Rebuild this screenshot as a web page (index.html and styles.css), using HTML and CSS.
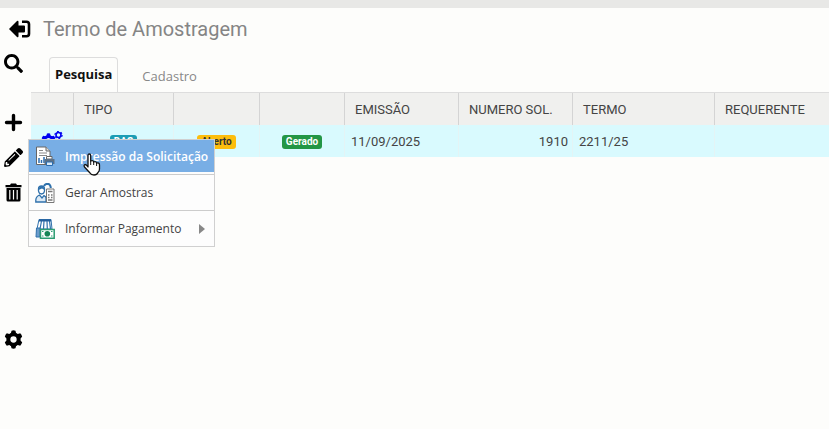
FILE: index.html
```html
<!DOCTYPE html>
<html lang="pt-BR">
  <head>
    <meta charset="UTF-8" />
    <meta name="viewport" content="width=device-width, initial-scale=1.0" />
    <title>Termo de Amostragem</title>
    <link rel="stylesheet" href="styles.css" />
  </head>
  <body>
    <svg class="defs" aria-hidden="true">
      <defs>
        <symbol id="gear" viewBox="0 0 24 24">
          <circle cx="12" cy="12" r="6.500" fill="none" stroke="currentColor" stroke-width="5" />
          <g fill="currentColor">
            <path id="teeth" d="M8.500 5 9.500 .8Q12 0 14.500 .8L15.500 5V7H8.500ZM8.500 19 9.500 23.200Q12 24 14.500 23.200L15.500 19V17H8.500Z" />
            <use href="#teeth" transform="rotate(60 12 12)" />
            <use href="#teeth" transform="rotate(120 12 12)" />
          </g>
        </symbol>
      </defs>
    </svg>

    <div class="topbar"></div>
    <header class="header">
      <button class="icon-button" aria-label="Voltar">
        <svg width="22" height="18" viewBox="0 0 22 18">
          <path d="M0 9 8 1Q9.500 0 9.500 2V5.500H15Q16 5.500 16 6.500V11.500Q16 12.500 15 12.500H9.500V16Q9.500 18 8 17Z" />
          <path d="M13 1.700H17.500Q20 1.700 20 4.200V13.800Q20 16.300 17.500 16.300H13" fill="none" stroke="#000" stroke-width="2.600" />
        </svg>
      </button>
      <h1>Termo de Amostragem</h1>
    </header>

    <div class="layout">
      <aside class="toolbar">
        <button class="icon-button" aria-label="Pesquisar">
          <svg width="19" height="19" viewBox="0 0 512 512">
            <path d="M505 442.700L405.300 343c-4.500-4.500-10.600-7-17-7H372c27.600-35.300 44-79.700 44-128C416 93.100 322.900 0 208 0S0 93.100 0 208s93.100 208 208 208c48.300 0 92.700-16.400 128-44v16.300c0 6.400 2.500 12.500 7 17l99.700 99.700c9.400 9.400 24.600 9.400 33.900 0l28.300-28.300c9.400-9.400 9.400-24.600.1-34zM208 336c-70.700 0-128-57.200-128-128 0-70.700 57.200-128 128-128 70.700 0 128 57.200 128 128 0 70.700-57.200 128-128 128z" />
          </svg>
        </button>
        <div class="toolbar-group">
          <button class="icon-button" aria-label="Novo">
            <svg width="19" height="19" viewBox="0 0 19 19">
              <path d="M9.500 2.500V16.500M2.500 9.500H16.500" fill="none" stroke="#000" stroke-width="3.400" stroke-linecap="round" />
            </svg>
          </button>
          <button class="icon-button" aria-label="Editar">
            <svg width="19" height="19" viewBox="0 0 512 512">
              <path d="M497.900 142.100l-46.100 46.100c-4.700 4.700-12.300 4.700-17 0l-111-111c-4.700-4.700-4.700-12.300 0-17l46.100-46.100c18.700-18.700 49.100-18.700 67.900 0l60.100 60.100c18.800 18.700 18.800 49.100 0 67.900zM284.200 99.800L21.600 362.400.4 483.900c-2.900 16.400 11.400 30.600 27.800 27.800l121.500-21.300 262.600-262.600c4.700-4.700 4.700-12.300 0-17l-111-111c-4.800-4.700-12.400-4.700-17.100 0zM124.100 339.900c-5.500-5.500-5.500-14.300 0-19.800l154-154c5.500-5.500 14.300-5.500 19.800 0s5.500 14.300 0 19.800l-154 154c-5.500 5.500-14.300 5.500-19.800 0zM88 424h48v36.300l-64.500 11.300-31.100-31.100L51.700 376H88v48z" />
            </svg>
          </button>
          <button class="icon-button" aria-label="Excluir">
            <svg width="19" height="19" viewBox="0 0 19 19">
              <path d="M1.500 2H6L7 .5H12L13 2H17.500V4.300H1.500Z" />
              <path fill-rule="evenodd" d="M2.500 5H16.500V17Q16.500 18.500 15 18.500H4Q2.500 18.500 2.500 17ZM5.200 7V16.500H6.400V7ZM8.900 7V16.500H10.100V7ZM12.600 7V16.500H13.800V7Z" />
            </svg>
          </button>
        </div>
        <button class="icon-button" aria-label="Configurações">
          <svg width="19" height="19"><use href="#gear" /></svg>
        </button>
      </aside>

      <main class="content">
        <nav class="tabs" role="tablist">
          <button class="tab tab-active" role="tab" aria-selected="true">Pesquisa</button>
          <button class="tab" role="tab" aria-selected="false">Cadastro</button>
        </nav>

        <div class="grid">
          <table class="table">
            <colgroup>
              <col class="col-actions" />
              <col class="col-type" />
              <col class="col-status" />
              <col class="col-sample" />
              <col class="col-date" />
              <col class="col-date" />
              <col class="col-term" />
              <col />
            </colgroup>
            <thead>
              <tr>
                <th></th>
                <th>TIPO</th>
                <th></th>
                <th></th>
                <th>EMISSÃO</th>
                <th>NUMERO SOL.</th>
                <th>TERMO</th>
                <th>REQUERENTE</th>
              </tr>
            </thead>
            <tbody>
              <tr>
                <td class="center">
                  <button class="icon-button row-actions" aria-label="Ações" aria-haspopup="menu">
                    <svg width="22" height="20" viewBox="0 0 22 20">
                      <use href="#gear" x="0" y="2" width="15" height="15" />
                      <g fill="none" stroke="currentColor">
                        <circle cx="17.500" cy="4" r="2.500" stroke-width="1.600" />
                        <circle cx="17.500" cy="4" r="3.600" stroke-width="1.200" stroke-dasharray="1.880 1.880" />
                        <circle cx="17.500" cy="15" r="2.500" stroke-width="1.600" />
                        <circle cx="17.500" cy="15" r="3.600" stroke-width="1.200" stroke-dasharray="1.880 1.880" />
                      </g>
                    </svg>
                  </button>
                </td>
                <td class="center"><span class="badge badge-teal">DAS</span></td>
                <td class="center"><span class="badge badge-yellow">Aberto</span></td>
                <td class="center"><span class="badge badge-green">Gerado</span></td>
                <td>11/09/2025</td>
                <td class="number">1910</td>
                <td>2211/25</td>
                <td></td>
              </tr>
            </tbody>
          </table>

          <div class="menu" role="menu">
            <button class="menu-item menu-item-active" role="menuitem">
              <svg width="20" height="20" viewBox="0 0 20 20">
                <path d="M1.500 1H11L15 5V18.500H1.500Z" fill="#fff" stroke="#666" />
                <path d="M11 1V5H15" fill="#ddd" stroke="#666" />
                <path d="M4 4.500H8M4 7H12M4 9.500H12" stroke="#888" />
                <path d="M4 17V12M6.500 17V14M9 17V11" stroke="#2a6cb0" stroke-width="1.500" />
                <path d="M11.500 10.500H17V13H11.500Z" fill="#fff" stroke="#666" />
                <path d="M9.500 13H19.500V18H9.500Z" fill="#5b7086" />
                <path d="M11.500 16H17.500V19.500H11.500Z" fill="#d8e8f6" stroke="#2a6cb0" />
              </svg>
              <span>Impressão da Solicitação</span>
            </button>
            <button class="menu-item" role="menuitem">
              <svg width="20" height="20" viewBox="0 0 20 20">
                <path d="M3.500 6Q3.500 3 6.500 3T9.500 6V8Q9 11 6.500 11T3.500 8Z" fill="#fff" stroke="#3071ac" stroke-width="1.300" />
                <path d="M3.500 7Q4 3 6.500 3T9.500 7L7 5.500Z" fill="#3071ac" />
                <path d="M.8 19V17Q1 13.500 4.500 12L7 15 9 12.500Q11 13.500 11 15V19Z" fill="#dbe9f5" stroke="#3071ac" stroke-width="1.300" />
                <path d="M9 3Q10 .8 12.500 .8Q15.500 1 15.800 5" fill="none" stroke="#3071ac" stroke-width="2" />
                <path d="M11.500 6H19V19.500H11.500Z" fill="#fff" stroke="#777" />
                <path d="M13 8.500H17.500M13 12H14.500M16 12H17.500M13 14.500H14.500M16 14.500H17.500M13 17H17.500" stroke="#777" stroke-width="1.300" />
              </svg>
              <span>Gerar Amostras</span>
            </button>
            <button class="menu-item" role="menuitem" aria-haspopup="menu">
              <svg width="20" height="20" viewBox="0 0 20 20">
                <path d="M4 .5H16L17 10H2Z" fill="#fff" stroke="#3071ac" />
                <path d="M4 .5H16V2.500H4Z" fill="#255f9c" />
                <path d="M6.500 2 5 10M9 2 8.500 10M12 2 12.300 10M14.500 2 15.500 10" stroke="#3071ac" stroke-width="1.200" />
                <path d="M1.500 9H5V18H1Z" fill="#6b9bcb" stroke="#3071ac" />
                <path d="M5.500 10.500H19.200V19.200H5.500Z" fill="#fff" stroke="#2c9c72" stroke-width="1.500" />
                <circle cx="12.300" cy="14.800" r="2.800" fill="#168456" />
                <path d="M7 12.500H8.500M16 12.500H17.500M7 17H8.500M16 17H17.500" stroke="#2c9c72" />
              </svg>
              <span>Informar Pagamento</span>
              <svg class="menu-arrow" width="6" height="10" viewBox="0 0 6 10"><path d="M0 0 6 5 0 10Z" /></svg>
            </button>
            <svg class="pointer" width="18" height="23" viewBox="0 0 18 23" aria-hidden="true">
              <path d="M5 14V2.500Q5 1 6.300 1T7.700 2.500V8Q10.300 7 10.700 9Q13 8 13.600 10Q16.500 9.300 16.500 12V16Q16.500 18 15 19.500Q14 22 11 22T7 20L1.500 14Q.5 12 2 11.500Q3.500 11.500 5 14Z" fill="#fff" stroke="#111" stroke-width="1.300" stroke-linejoin="round" />
              <path d="M7.700 8V12M10.700 9V12M13.600 10V13" stroke="#111" />
            </svg>
          </div>
        </div>
      </main>
    </div>
  </body>
</html>
```
FILE: styles.css
```css
* {
  box-sizing: border-box;
}

body {
  margin: 0;
  background: #fdfdfb;
  color: #444;
  font-family: Roboto, sans-serif;
  font-size: 13px;
}

button {
  margin: 0;
  padding: 0;
  border: 0;
  background: none;
  color: inherit;
  font: inherit;
  cursor: pointer;
}

svg {
  display: block;
  flex: none;
}

.defs {
  position: absolute;
  width: 0;
  height: 0;
}

.topbar {
  height: 8px;
  background: #e8e8e6;
}

.header {
  display: flex;
  align-items: center;
  gap: 12px;
  height: 42px;
  padding-left: 9px;
}

h1 {
  margin: 0;
  color: #858585;
  font-size: 20px;
  font-weight: 400;
}

.icon-button {
  color: #000;
}

.layout {
  display: flex;
}

.toolbar {
  display: flex;
  flex: none;
  flex-direction: column;
  align-items: flex-start;
  width: 31px;
  padding: 4px 4px 0;
}

.toolbar-group {
  display: grid;
  gap: 16px;
  margin: 40px 0 128px;
}

.content {
  flex: 1;
  min-width: 0;
}

/* tabs */
.tabs {
  display: flex;
  align-items: flex-end;
  gap: 16px;
  height: 42px;
  padding-left: 18px;
}

.tab {
  height: 32px;
  padding: 0 8px;
  color: #888;
  font-family: "Open Sans", sans-serif;
  font-size: 13px;
}

.tab-active {
  height: 35px;
  padding: 0 5px 2px;
  border: 1px solid #ddd;
  border-bottom: 0;
  border-radius: 4px 4px 0 0;
  color: #111;
  font-weight: 700;
}

/* table */
.grid {
  position: relative;
}

.table {
  width: 100%;
  border-collapse: separate;
  border-spacing: 0;
  border-top: 1px solid #ddd;
  table-layout: fixed;
}

.col-actions {
  width: 43px;
}

.col-type {
  width: 100px;
}

.col-status {
  width: 86px;
}

.col-sample {
  width: 85px;
}

.col-date {
  width: 114px;
}

.col-term {
  width: 142px;
}

th,
td {
  height: 32px;
  padding: 0 6px;
  border-right: 1px solid #e4f4f5;
  text-align: left;
  white-space: nowrap;
}

th {
  padding: 0 10px;
  border-color: #d4d4d4;
  background: #f0f0ee;
  font-weight: 400;
}

td {
  background: #d9fafe;
}

th:last-child,
td:last-child {
  border-right: 0;
}

.center {
  text-align: center;
}

.number {
  padding-right: 4px;
  text-align: right;
}

.row-actions {
  display: inline-block;
  color: #0000f0;
  vertical-align: middle;
}

.badge {
  display: inline-block;
  padding: 0 4px;
  border-radius: 3px;
  color: #fff;
  font-size: 10px;
  font-weight: 700;
  line-height: 14px;
  vertical-align: middle;
}

.badge-teal {
  background: #1c9cb4;
}

.badge-yellow {
  background: #fdbd0c;
  color: #333;
}

.badge-green {
  background: #239645;
}

/* context menu */
.menu {
  position: absolute;
  top: 47px;
  left: -3px;
  width: 187px;
  border: 1px solid #d0d0d0;
  background: #fdfdfd;
  font-family: "Open Sans", sans-serif;
  font-size: 12px;
}

.menu-item {
  display: flex;
  align-items: center;
  gap: 10px;
  width: 100%;
  height: 34px;
  padding: 0 9px 0 6px;
  text-align: left;
  white-space: nowrap;
}

.menu-item + .menu-item {
  height: 36px;
  border-top: 1px solid #ccc;
}

.menu-item-active {
  border-bottom: 2px solid #fdfdfd;
  background: #78aee5;
  color: #fff;
  font-weight: 600;
}

.menu-arrow {
  margin-left: auto;
  fill: #888;
}

.pointer {
  position: absolute;
  top: 13px;
  left: 54px;
}
```
